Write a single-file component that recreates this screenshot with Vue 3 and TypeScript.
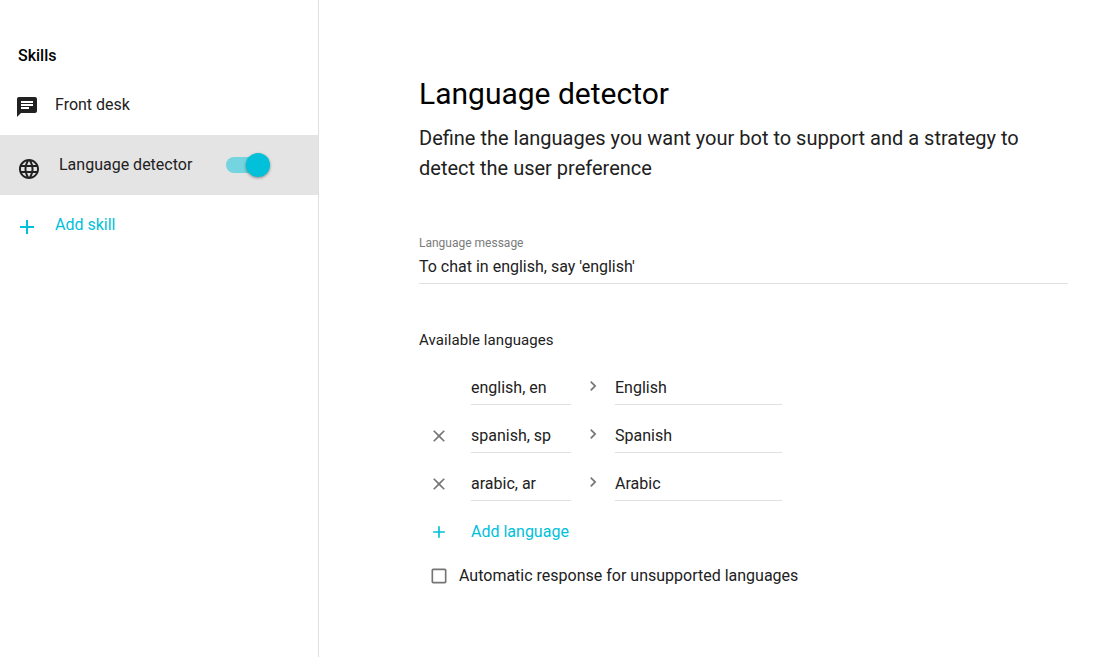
<script setup lang="ts">
import { ref } from 'vue'

interface Language {
  keywords: string
  name: string
  removable: boolean
}

const languages = ref<Language[]>([
  { keywords: 'english, en', name: 'English', removable: false },
  { keywords: 'spanish, sp', name: 'Spanish', removable: true },
  { keywords: 'arabic, ar', name: 'Arabic', removable: true },
])
const message = "To chat in english, say 'english'"
</script>

<template>
  <div class="page">
    <aside class="sidebar">
      <h2 class="heading">Skills</h2>
      <div class="item desk">
        <svg class="icon" viewBox="0 0 24 24"><path d="M20 2H4c-1.100 0-1.990.9-1.990 2L2 22l4-4h14c1.100 0 2-.9 2-2V4c0-1.100-.9-2-2-2zM6 9h12v2H6V9zm8 5H6v-2h8v2zm4-6H6V6h12v2z" /></svg>
        <span class="label">Front desk</span>
      </div>
      <div class="item selected">
        <svg class="icon" viewBox="0 0 24 24"><path d="M11.990 2C6.470 2 2 6.480 2 12s4.470 10 9.990 10C17.520 22 22 17.520 22 12S17.520 2 11.990 2zm6.930 6h-2.950c-.32-1.250-.78-2.450-1.380-3.560 1.840.63 3.370 1.910 4.330 3.560zM12 4.040c.83 1.200 1.480 2.530 1.910 3.960h-3.820c.43-1.430 1.080-2.760 1.910-3.960zM4.260 14C4.100 13.360 4 12.690 4 12s.1-1.360.26-2h3.380c-.08.66-.14 1.320-.14 2s.06 1.340.14 2H4.260zm.82 2h2.950c.32 1.250.78 2.450 1.380 3.560-1.840-.63-3.370-1.900-4.330-3.560zm2.950-8H5.080c.96-1.660 2.490-2.930 4.330-3.560C8.810 5.550 8.350 6.750 8.030 8zM12 19.960c-.83-1.200-1.480-2.530-1.910-3.960h3.820c-.43 1.430-1.080 2.760-1.910 3.960zM14.340 14H9.660c-.09-.66-.16-1.320-.16-2s.07-1.350.16-2h4.680c.09.65.16 1.320.16 2s-.07 1.340-.16 2zm.25 5.560c.6-1.110 1.060-2.310 1.380-3.560h2.950c-.96 1.650-2.490 2.930-4.330 3.560zM16.360 14c.08-.66.14-1.320.14-2s-.06-1.340-.14-2h3.380c.16.64.26 1.310.26 2s-.1 1.360-.26 2h-3.380z" /></svg>
        <span class="label">Language detector</span>
        <span class="switch"><span class="knob"></span></span>
      </div>
      <div class="item add">
        <svg class="icon" viewBox="0 0 24 24"><path d="M19 13h-6v6h-2v-6H5v-2h6V5h2v6h6v2z" /></svg>
        <span class="label">Add skill</span>
      </div>
    </aside>
    <main class="content">
      <h1 class="title">Language detector</h1>
      <p class="subtitle">Define the languages you want your bot to support and a strategy to detect the user preference</p>
      <div class="field">
        <span class="caption">Language message</span>
        <span class="value">{{ message }}</span>
      </div>
      <h3 class="section">Available languages</h3>
      <div v-for="lang in languages" :key="lang.name" class="row">
        <span class="remove">
          <svg v-if="lang.removable" class="small" viewBox="0 0 24 24"><path d="M19 6.410L17.590 5 12 10.590 6.410 5 5 6.410 10.590 12 5 17.590 6.410 19 12 13.410 17.590 19 19 17.590 13.410 12z" /></svg>
        </span>
        <span class="input keywords">{{ lang.keywords }}</span>
        <svg class="small arrow" viewBox="0 0 24 24"><path d="M10 6L8.590 7.410 13.170 12l-4.580 4.590L10 18l6-6z" /></svg>
        <span class="input name">{{ lang.name }}</span>
      </div>
      <div class="add-language">
        <svg class="small" viewBox="0 0 24 24"><path d="M19 13h-6v6h-2v-6H5v-2h6V5h2v6h6v2z" /></svg>
        <span>Add language</span>
      </div>
      <div class="option">
        <svg class="small" viewBox="0 0 24 24"><path d="M19 5v14H5V5h14m0-2H5c-1.100 0-2 .9-2 2v14c0 1.100.9 2 2 2h14c1.100 0 2-.9 2-2V5c0-1.100-.9-2-2-2z" /></svg>
        <span>Automatic response for unsupported languages</span>
      </div>
    </main>
  </div>
</template>

<style>
body {
  margin: 0;
  background: #fff;
}
</style>

<style scoped>
.page {
  display: flex;
  height: 657px;
  overflow: hidden;
  box-sizing: border-box;
  font-family: Roboto, sans-serif;
  font-size: 16px;
  line-height: 24px;
  color: #212121;
}
svg {
  display: block;
  flex: none;
  fill: currentColor;
}
.sidebar {
  width: 318px;
  flex: none;
  border-right: 1px solid #e0e0e0;
}
.heading {
  margin: 44px 0 0 18px;
  font-size: 16px;
  font-weight: 500;
  line-height: 24px;
  color: #000;
}
.item {
  display: flex;
  height: 60px;
  box-sizing: border-box;
  padding-left: 15px;
}
.item .icon {
  width: 24px;
  height: 24px;
  margin-top: 20px;
}
.item .label {
  margin: 18px 0 0 16px;
}
.desk {
  margin-top: 7px;
}
.selected {
  background: #e4e4e4;
  padding-left: 17px;
}
.selected .icon {
  margin-top: 22px;
}
.selected .label {
  margin-left: 18px;
}
.switch {
  display: flex;
  align-items: center;
  justify-content: flex-end;
  width: 40px;
  height: 16px;
  margin: 22px 0 0 34px;
  border-radius: 8px;
  background: #74d4df;
}
.knob {
  flex: none;
  width: 24px;
  height: 24px;
  margin-right: -4px;
  border-radius: 50%;
  background: #00c0da;
  box-shadow: 0 1px 3px rgba(0, 0, 0, 0.4);
}
.add {
  color: #00c0da;
}
.content {
  width: 649px;
  padding: 74px 0 0 100px;
}
.title {
  margin: 0;
  font-size: 30px;
  font-weight: 400;
  line-height: 40px;
  color: #000;
}
.subtitle {
  margin: 9px 0 0;
  font-size: 20px;
  line-height: 30px;
}
.field {
  display: flex;
  flex-direction: column;
  height: 48px;
  margin-top: 52px;
  border-bottom: 1px solid #e0e0e0;
}
.caption {
  font-size: 12px;
  line-height: 16px;
  color: #7b7b7b;
}
.value {
  margin-top: 4px;
}
.section {
  margin: 44px 0 12px;
  font-size: 15px;
  font-weight: 400;
  line-height: 24px;
  letter-spacing: 0.09px;
}
.row {
  display: flex;
  height: 48px;
}
.remove {
  width: 52px;
  box-sizing: border-box;
  padding: 14px 0 0 10px;
  color: #757575;
}
.small {
  width: 20px;
  height: 20px;
}
.input {
  height: 41px;
  box-sizing: border-box;
  padding-top: 12px;
  border-bottom: 1px solid #e0e0e0;
}
.keywords {
  width: 100px;
}
.arrow {
  margin: 12px 12px 0;
  color: #757575;
}
.name {
  width: 167px;
}
.add-language {
  display: flex;
  align-items: center;
  gap: 22px;
  height: 48px;
  padding-left: 10px;
  color: #00c0da;
}
.option {
  display: flex;
  align-items: center;
  gap: 10px;
  height: 40px;
  padding-left: 10px;
}
.option .small {
  color: #757575;
}
</style>
